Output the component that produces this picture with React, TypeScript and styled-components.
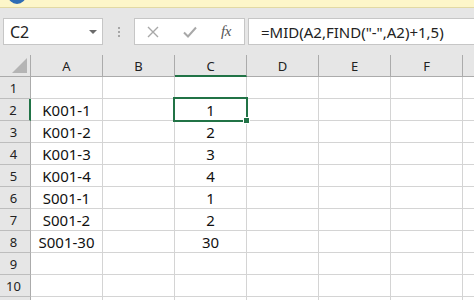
import styled, { createGlobalStyle } from 'styled-components';

const COLUMNS = ['A', 'B', 'C', 'D', 'E', 'F', 'G'];
const VISIBLE_LABELS = 6;
const ROW_COUNT = 11;
const LABELED_ROWS = 10;

const DATA: Record<number, { A?: string; C?: string }> = {
  2: { A: 'K001-1', C: '1' },
  3: { A: 'K001-2', C: '2' },
  4: { A: 'K001-3', C: '3' },
  5: { A: 'K001-4', C: '4' },
  6: { A: 'S001-1', C: '1' },
  7: { A: 'S001-2', C: '2' },
  8: { A: 'S001-30', C: '30' },
};

const ACTIVE_COL = 'C';
const ACTIVE_ROW = 2;

const GlobalStyle = createGlobalStyle`
  html, body {
    margin: 0;
    padding: 0;
    background: #ffffff;
    overflow: hidden;
  }
  body {
    width: 474px;
    height: 300px;
    font-family: "Noto Sans", "Open Sans", sans-serif;
  }
`;

const App = (): JSX.Element => {
  return (
    <Window>
      <GlobalStyle />
      <InfoBar>
        <InfoIcon width="20" height="8" viewBox="0 0 20 8">
          <circle cx="9" cy="-5" r="9" fill="#2f6db5" />
        </InfoIcon>
      </InfoBar>

      <FormulaBar>
        <NameBox>
          <span>C2</span>
          <DropArrow />
        </NameBox>
        <Grip>
          <i />
          <i />
          <i />
        </Grip>
        <ActionBox>
          <svg width="12" height="12" viewBox="0 0 12 12">
            <path d="M1 1 L11 11 M11 1 L1 11" stroke="#a8a8a8" strokeWidth="1.4" fill="none" />
          </svg>
          <svg width="14" height="12" viewBox="0 0 14 12">
            <path d="M1 6.5 L5 10.5 L13 1.5" stroke="#a8a8a8" strokeWidth="2" fill="none" />
          </svg>
          <FxLabel>fx</FxLabel>
        </ActionBox>
        <FormulaInput>=MID(A2,FIND("-",A2)+1,5)</FormulaInput>
      </FormulaBar>

      <Sheet>
        <Corner>
          <svg width="15" height="15" viewBox="0 0 15 15">
            <polygon points="15,0 15,15 0,15" fill="#b4b4b4" />
          </svg>
        </Corner>
        {COLUMNS.map((col, i) => (
          <ColHeader key={col} $active={col === ACTIVE_COL}>
            {i < VISIBLE_LABELS ? col : ''}
          </ColHeader>
        ))}

        {Array.from({ length: ROW_COUNT }, (_, i) => i + 1).map(row => (
          <Row key={row}>
            <RowHeader $active={row === ACTIVE_ROW}>{row <= LABELED_ROWS ? row : ''}</RowHeader>
            {COLUMNS.map(col => {
              const value = (DATA[row] as Record<string, string> | undefined)?.[col] ?? '';
              const selected = col === ACTIVE_COL && row === ACTIVE_ROW;
              return (
                <Cell key={col} $selected={selected}>
                  {value}
                  {selected && <FillHandle />}
                </Cell>
              );
            })}
          </Row>
        ))}
      </Sheet>
    </Window>
  );
};

export default App;

const Window = styled.div`
  width: 474px;
  height: 300px;
  overflow: hidden;
  display: flex;
  flex-direction: column;
  background: #e6e6e6;
`;

const InfoBar = styled.div`
  height: 7px;
  background: #fdf6c9;
  border-bottom: 1px solid #e2d9a4;
  padding-left: 8px;
  flex-shrink: 0;
`;

const InfoIcon = styled.svg`
  display: block;
`;

const FormulaBar = styled.div`
  display: flex;
  align-items: stretch;
  height: 27px;
  padding: 10px 0 10px 3px;
  flex-shrink: 0;
`;

const NameBox = styled.div`
  width: 100px;
  box-sizing: border-box;
  display: flex;
  align-items: center;
  justify-content: space-between;
  padding: 0 5px 0 6px;
  background: #ffffff;
  border: 1px solid #c6c6c6;
  font-size: 16px;
  color: #222;
`;

const DropArrow = styled.span`
  width: 0;
  height: 0;
  border-left: 4px solid transparent;
  border-right: 4px solid transparent;
  border-top: 4px solid #6b6b6b;
  margin-top: 1px;
`;

const Grip = styled.div`
  width: 31px;
  display: flex;
  flex-direction: column;
  align-items: center;
  justify-content: center;
  gap: 2px;

  i {
    display: block;
    width: 2px;
    height: 2px;
    background: #a6a6a6;
  }
`;

const ActionBox = styled.div`
  width: 111px;
  box-sizing: border-box;
  display: flex;
  align-items: center;
  padding-left: 12px;
  background: #ffffff;
  border: 1px solid #c6c6c6;

  svg {
    margin-right: 24px;
  }
`;

const FxLabel = styled.span`
  font-family: "Liberation Serif", "DejaVu Serif", serif;
  font-style: italic;
  font-size: 15px;
  color: #555;
  letter-spacing: -0.5px;
`;

const FormulaInput = styled.div`
  flex: 1;
  margin-left: 3px;
  display: flex;
  align-items: center;
  padding-left: 12px;
  background: #ffffff;
  border: 1px solid #c6c6c6;
  border-right: none;
  font-size: 15px;
  color: #222;
  white-space: nowrap;
`;

const Sheet = styled.div`
  flex: 1;
  display: grid;
  grid-template-columns: 31px repeat(7, 72px);
  grid-auto-rows: 22px;
  grid-template-rows: 22px;
  background: #ffffff;
`;

const Row = styled.div`
  display: contents;
`;

const Corner = styled.div`
  background: #e6e6e6;
  border-right: 1px solid #ababab;
  border-bottom: 1px solid #ababab;
  display: flex;
  align-items: flex-end;
  justify-content: flex-end;
  padding: 0 3px 3px 0;
`;

const ColHeader = styled.div<{ $active: boolean }>`
  background: #e6e6e6;
  border-right: 1px solid #ababab;
  border-bottom: ${p => (p.$active ? '2px solid #217346' : '1px solid #ababab')};
  display: flex;
  align-items: center;
  justify-content: center;
  font-size: 13px;
  color: #222;
  padding-top: ${p => (p.$active ? '1px' : '0')};
`;

const RowHeader = styled.div<{ $active: boolean }>`
  background: #e6e6e6;
  border-right: ${p => (p.$active ? '2px solid #217346' : '1px solid #ababab')};
  border-bottom: 1px solid #bdbdbd;
  display: flex;
  align-items: center;
  justify-content: center;
  font-size: 13px;
  color: #222;
  padding-right: 3px;
`;

const Cell = styled.div<{ $selected: boolean }>`
  position: relative;
  border-right: 1px solid #d4d4d4;
  border-bottom: 1px solid #d4d4d4;
  display: flex;
  align-items: center;
  justify-content: center;
  font-size: 15px;
  color: #111;
  white-space: nowrap;
  z-index: ${p => (p.$selected ? 2 : 0)};

  ${p =>
    p.$selected &&
    `
    &::after {
      content: '';
      position: absolute;
      top: -2px;
      left: -2px;
      right: -2px;
      bottom: -2px;
      border: 2px solid #217346;
      pointer-events: none;
    }
  `}
`;

const FillHandle = styled.span`
  position: absolute;
  right: -4px;
  bottom: -4px;
  width: 5px;
  height: 5px;
  background: #217346;
  border: 1px solid #ffffff;
  z-index: 3;
`;
